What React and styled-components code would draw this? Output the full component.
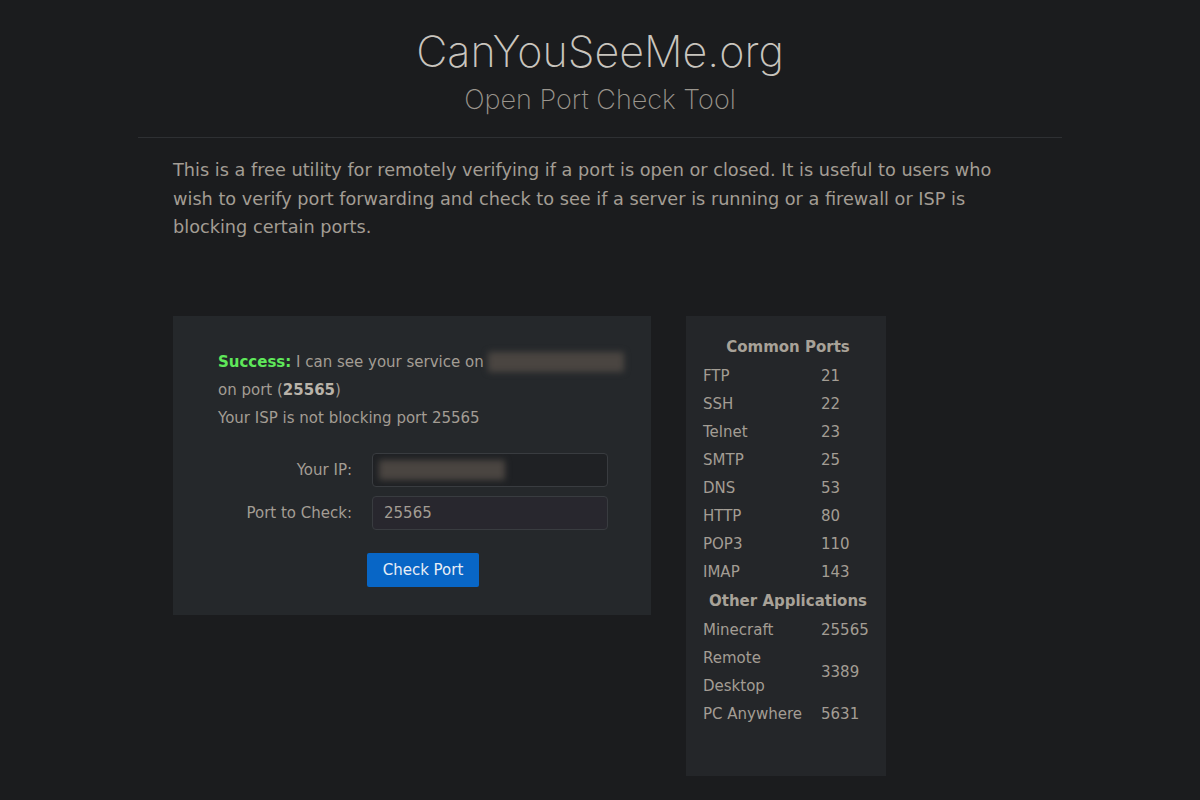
import React from 'react';
import styled, { createGlobalStyle } from 'styled-components';

const GlobalStyle = createGlobalStyle`
  html, body {
    margin: 0;
    background: #1b1c1e;
    color: #a39d94;
    font-family: "DejaVu Sans", sans-serif;
  }
`;

const Page = styled.div`
  width: 924px;
  margin: 0 auto;
  padding-top: 27px;
  min-height: 773px;
`;

const Header = styled.header`
  text-align: center;
  padding-bottom: 20px;
  border-bottom: 1px solid #2e3033;
`;

const Title = styled.h1`
  margin: 0;
  font-family: Inter, "Open Sans", sans-serif;
  font-weight: 200;
  font-size: 43px;
  line-height: 48px;
  color: #c9c5be;
`;

const Subtitle = styled.h2`
  margin: 8px 0 0;
  font-family: Inter, "Open Sans", sans-serif;
  font-weight: 200;
  font-size: 27px;
  line-height: 34px;
  color: #9a958d;
`;

const Intro = styled.p`
  margin: 18px 35px 0;
  font-size: 17.7px;
  line-height: 28.5px;
  color: #a39d94;
`;

const Columns = styled.div`
  display: flex;
  align-items: flex-start;
  gap: 35px;
  margin: 74px 0 0 35px;
`;

const Card = styled.section`
  width: 478px;
  box-sizing: border-box;
  background: #25282b;
  padding: 32px 24px 28px 45px;
`;

const Message = styled.p`
  margin: 0;
  font-size: 15px;
  line-height: 28px;
  color: #a39d94;
`;

const Good = styled.strong`
  color: #5fe85a;
`;

const Strong = styled.strong`
  color: #b9b3a9;
`;

const Blur = styled.span`
  display: inline-block;
  vertical-align: middle;
  width: ${p => p.w}px;
  height: 20px;
  margin-left: ${p => p.offset ?? 4}px;
  background: #4a4541;
  filter: blur(3px);
  border-radius: 2px;
`;

const Form = styled.div`
  display: grid;
  grid-template-columns: 134px 236px;
  column-gap: 20px;
  row-gap: 9px;
  align-items: center;
  margin-top: 21px;
`;

const Label = styled.label`
  text-align: right;
  font-size: 15px;
  color: #a39d94;
`;

const Field = styled.div`
  height: 34px;
  box-sizing: border-box;
  border: 1px solid #393c40;
  border-radius: 4px;
  background: ${p => (p.alt ? '#28272e' : '#1f2124')};
  display: flex;
  align-items: center;
  padding: 0 11px;
  font-size: 15px;
  color: #a39d94;
  overflow: hidden;
`;

const Actions = styled.div`
  margin-top: 23px;
  padding-left: 149px;
`;

const Button = styled.button`
  background: #0866c6;
  color: #e8eef6;
  border: none;
  border-radius: 2px;
  font-family: "DejaVu Sans", sans-serif;
  font-size: 15px;
  height: 34px;
  width: 112px;
  padding: 0;
`;

const Side = styled.aside`
  width: 200px;
  min-height: 460px;
  box-sizing: border-box;
  background: #242629;
  padding: 16px 0 0 17px;
`;

const Table = styled.table`
  border-collapse: collapse;
  font-size: 15px;
  color: #a39d94;
  width: 170px;
`;

const Heading = styled.th`
  font-weight: bold;
  text-align: center;
  height: 28px;
  color: #a8a298;
`;

const Cell = styled.td`
  height: 28px;
  line-height: 28px;
  padding: 0;
  vertical-align: middle;
  width: ${p => (p.first ? '118px' : 'auto')};
`;

const common = [
  ['FTP', 21], ['SSH', 22], ['Telnet', 23], ['SMTP', 25],
  ['DNS', 53], ['HTTP', 80], ['POP3', 110], ['IMAP', 143],
];

const other = [
  ['Minecraft', 25565], ['Remote Desktop', 3389], ['PC Anywhere', 5631],
];

const Rows = ({ items }) =>
  items.map(([name, port]) => (
    <tr key={name}>
      <Cell first>{name}</Cell>
      <Cell>{port}</Cell>
    </tr>
  ));

export default function App() {
  return (
    <>
      <GlobalStyle />
      <Page>
        <Header>
          <Title>CanYouSeeMe.org</Title>
          <Subtitle>Open Port Check Tool</Subtitle>
        </Header>
        <Intro>
          This is a free utility for remotely verifying if a port is open or closed. It is useful to users who
          wish to verify port forwarding and check to see if a server is running or a firewall or ISP is
          blocking certain ports.
        </Intro>
        <Columns>
          <Card>
            <Message>
              <Good>Success:</Good> I can see your service on<Blur w={136} />
              <br />
              on port (<Strong>25565</Strong>)
            </Message>
            <Message>Your ISP is not blocking port 25565</Message>
            <Form>
              <Label>Your IP:</Label>
              <Field>
                <Blur w={126} offset={-5} />
              </Field>
              <Label>Port to Check:</Label>
              <Field alt>25565</Field>
            </Form>
            <Actions>
              <Button>Check Port</Button>
            </Actions>
          </Card>
          <Side>
            <Table>
              <tbody>
                <tr><Heading colSpan={2}>Common Ports</Heading></tr>
                <Rows items={common} />
                <tr><Heading colSpan={2}>Other Applications</Heading></tr>
                <Rows items={other} />
              </tbody>
            </Table>
          </Side>
        </Columns>
      </Page>
    </>
  );
}
